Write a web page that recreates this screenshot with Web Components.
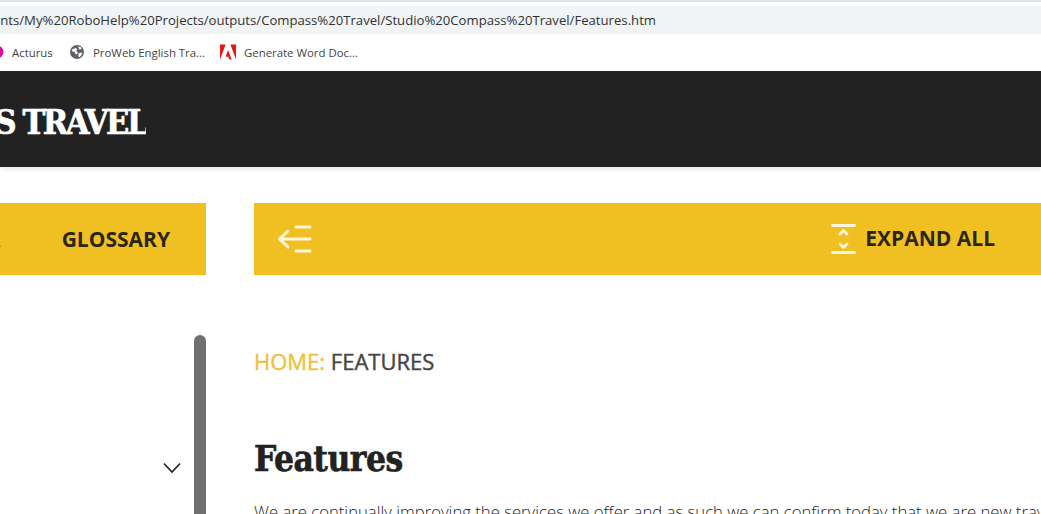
<!DOCTYPE html>
<html>
<head>
<meta charset="utf-8">
<title>Features</title>
<style>
  html, body { margin: 0; height: 514px; overflow: hidden; background: #fff; }
  body { font-family: "Open Sans", "Liberation Sans", sans-serif; display: flex; flex-direction: column; }
  .page { display: grid; grid-template-columns: 206px 1fr; column-gap: 48px; padding-top: 36px; }
</style>
</head>
<body>
<browser-chrome url="file:///C:/Users/Documents/My%20RoboHelp%20Projects/outputs/Compass%20Travel/Studio%20Compass%20Travel/Features.htm"></browser-chrome>
<site-header>COMPASS TRAVEL</site-header>
<div class="page">
  <side-panel></side-panel>
  <main-panel>
    <bread-crumb home="HOME:" current="FEATURES"></bread-crumb>
    <h1 slot="title">Features</h1>
    <p slot="body">We are continually improving the services we offer and as such we can confirm today that we are new travel agents for the region</p>
  </main-panel>
</div>

<script>
class BrowserChrome extends HTMLElement {
  constructor() {
    super();
    const root = this.attachShadow({ mode: 'open' });
    root.innerHTML = `
<style>
:host { display: block; height: 71px; background: #fff; flex: none; }
.edge { height: 2px; background: #dee1e6; }
.addr { margin-top: 4px; height: 28px; background: #f1f3f4; display: flex; align-items: center; overflow: hidden; }
.url { width: 656px; flex: none; display: flex; justify-content: flex-end; overflow: hidden;
  font: 13.15px "Open Sans", sans-serif; color: #303336; white-space: nowrap; }
.marks { height: 36px; display: flex; align-items: center; overflow: hidden; font: 11.4px "Open Sans", sans-serif; color: #444; white-space: nowrap; }
.mark { display: flex; align-items: center; flex: none; }
.mark svg { flex: none; display: block; }
.m1 { gap: 8px; margin-left: -10px; width: 61px; }
.m2 { margin-left: 19px; gap: 9px; width: 134px; }
.m3 { margin-left: 16px; gap: 8px; }
</style>
<div class="edge"></div>
<div class="addr"><div class="url"><span></span></div></div>
<div class="marks">
  <div class="mark m1">
    <svg width="14" height="14" viewBox="0 0 14 14"><circle cx="7" cy="7" r="6.5" fill="#d6109a"/><circle cx="7" cy="7" r="3" fill="#fff"/></svg>
    <span>Acturus</span>
  </div>
  <div class="mark m2">
    <svg width="14" height="14" viewBox="0 0 14 14"><circle cx="7" cy="7" r="7" fill="#5f6368"/><path d="M2 4.5 5.6 3l1.6 1.2-1 1.7 1.6 1.3-1 2.3-1.4-.4-.6-2.2L2.3 6.4zM8.6 8.2l2.8-.6.9 1.4-2.4 3-1.6-.6zM8 1.4l3 .9.4 1.7-2 .5z" fill="#fff"/></svg>
    <span>ProWeb English Tra...</span>
  </div>
  <div class="mark m3">
    <svg width="16" height="16" viewBox="0 0 16 16"><path d="M0 .5h5.6L0 15.5zM10.4 .5H16v15zM8 6l3.6 9.5H9.3l-1-2.7H5.700z" fill="#e8140f"/></svg>
    <span>Generate Word Doc...</span>
  </div>
</div>`;
    root.querySelector('.url span').textContent = this.getAttribute('url');
  }
}
customElements.define('browser-chrome', BrowserChrome);

class SiteHeader extends HTMLElement {
  constructor() {
    super();
    const root = this.attachShadow({ mode: 'open' });
    root.innerHTML = `
<style>
:host { display: flex; align-items: center; height: 96px; flex: none; background: #222; box-shadow: 0 2px 5px rgba(0,0,0,.1); }
.logo { width: 146px; flex: none; display: flex; justify-content: flex-end; overflow: hidden; white-space: nowrap;
  font: 700 34px "DejaVu Serif", serif; font-stretch: condensed; letter-spacing: -2.4px; color: #fff;
  -webkit-text-stroke: .7px #fff; padding-top: 5px; }
</style>
<div class="logo"><span><slot></slot></span></div>`;
  }
}
customElements.define('site-header', SiteHeader);

class TabBar extends HTMLElement {
  constructor() {
    super();
    const root = this.attachShadow({ mode: 'open' });
    root.innerHTML = `
<style>
:host { display: flex; align-items: center; height: 72px; background: #f0c023; color: #2b2616;
  font: 700 21px "Open Sans", sans-serif; white-space: nowrap; overflow: hidden; }
</style>
<slot></slot>`;
  }
}
customElements.define('tab-bar', TabBar);

class SidePanel extends HTMLElement {
  constructor() {
    super();
    const root = this.attachShadow({ mode: 'open' });
    root.innerHTML = `
<style>
:host { display: block; min-width: 0; }
.tabs { display: flex; justify-content: flex-end; gap: 61px; padding-right: 36px; }
.tree { display: flex; justify-content: flex-end; margin-top: 60px; height: 200px; }
.row { width: 18px; margin-right: 13px; padding-top: 127px; }
.row svg { display: block; }
.thumb { width: 12px; height: 240px; background: #707070; border-radius: 6px; flex: none; }
</style>
<tab-bar><div class="tabs" style="width:100%;box-sizing:border-box"><span>INDEX</span><span>GLOSSARY</span></div></tab-bar>
<div class="tree">
  <div class="row"><svg width="18" height="12" viewBox="0 0 18 12"><path d="M1 1.5l8 8.500 8-8.500" fill="none" stroke="#222" stroke-width="1.600"/></svg></div>
  <div class="thumb"></div>
</div>`;
  }
}
customElements.define('side-panel', SidePanel);

class MainPanel extends HTMLElement {
  constructor() {
    super();
    const root = this.attachShadow({ mode: 'open' });
    root.innerHTML = `
<style>
:host { display: block; min-width: 0; }
.tools { flex: 1; display: flex; align-items: center; justify-content: space-between; padding: 0 46px 0 23px; }
.expand { display: flex; align-items: center; gap: 9px; }
.expand span { padding-bottom: 2px; }
svg { display: block; flex: none; }
.body { padding-top: 72px; }
::slotted(h1) { margin: 59px 0 0; font: 700 35px/50px "DejaVu Serif", serif; font-stretch: condensed; letter-spacing: -0.5px; color: #222; -webkit-text-stroke: .6px #222; }
::slotted(p) { margin: 15px 0 0; font: 300 16.7px/26px "Open Sans", sans-serif; color: #222; white-space: nowrap; }
</style>
<tab-bar>
  <div class="tools" style="width:100%;box-sizing:border-box">
    <svg width="36" height="30" viewBox="0 0 36 30" fill="none" stroke="#fff6dc" stroke-width="3" stroke-linecap="round" stroke-linejoin="round">
      <path d="M19 3h14M3 15h30M19 27h14M11 7 2.500 15l8.500 8"/>
    </svg>
    <div class="expand">
      <svg width="26" height="30" viewBox="0 0 26 30" fill="none" stroke="#fff6dc" stroke-width="2.800" stroke-linecap="round" stroke-linejoin="round">
        <path d="M2.500 1.500h22M2.500 28.500h22"/>
        <path d="M10 10l3.500-3.500 3.500 3.500M10 20l3.500 3.500 3.500-3.500"/>
      </svg>
      <span>EXPAND ALL</span>
    </div>
  </div>
</tab-bar>
<div class="body">
  <slot></slot>
  <slot name="title"></slot>
  <slot name="body"></slot>
</div>`;
  }
}
customElements.define('main-panel', MainPanel);

class BreadCrumb extends HTMLElement {
  constructor() {
    super();
    const root = this.attachShadow({ mode: 'open' });
    root.innerHTML = `
<style>
:host { display: block; font: 400 22px/28px "Open Sans", sans-serif; color: #444; white-space: nowrap; -webkit-text-stroke: .4px; }
.home { color: #f0bf3c; }
</style>
<span class="home"></span> <span class="cur"></span>`;
    root.querySelector('.home').textContent = this.getAttribute('home');
    root.querySelector('.cur').textContent = this.getAttribute('current');
  }
}
customElements.define('bread-crumb', BreadCrumb);
</script>
</body>
</html>
